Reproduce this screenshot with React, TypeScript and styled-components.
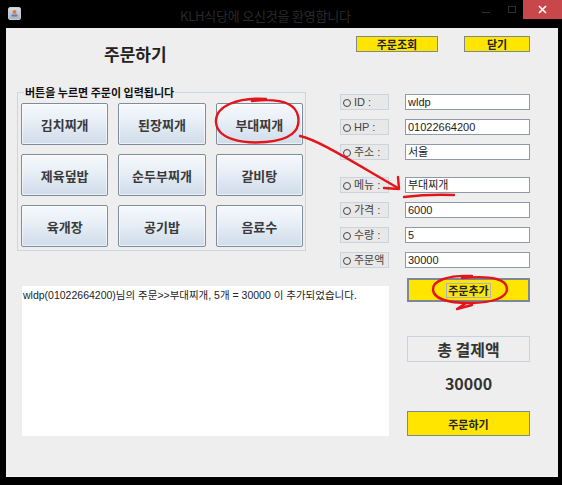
import React from "react";
import styled, { createGlobalStyle } from "styled-components";

const GlobalStyle = createGlobalStyle`
  html, body { margin: 0; padding: 0; background: #000; }
  #root { width: 562px; height: 485px; }
  * { box-sizing: border-box; }
`;

const FONT = `"Liberation Sans", "Noto Sans CJK KR", sans-serif`;

const Frame = styled.div`
  position: relative;
  width: 562px;
  height: 485px;
  background: #000;
  display: flex;
  flex-direction: column;
  font-family: ${FONT};
  overflow: hidden;
`;

const TitleBar = styled.div`
  height: 28px;
  display: flex;
  align-items: flex-start;
  padding-left: 8px;
  color: #2a2a2a;
`;

const AppIcon = styled.div`
  width: 13px;
  height: 13px;
  margin-top: 7px;
  border-radius: 2px;
  background: linear-gradient(#d8dde4, #a9b3bf);
  border: 1px solid #c4ccd6;
  display: flex;
  align-items: center;
  justify-content: center;
`;

const TitleText = styled.div`
  margin-left: 159px;
  margin-top: 6px;
  font-size: 13px;
  color: #2a2a2a;
  font-family: "Noto Sans CJK KR", "Liberation Sans", sans-serif;
  letter-spacing: -0.2px;
`;

const Controls = styled.div`
  margin-left: auto;
  display: flex;
  align-items: flex-start;
  height: 19px;
`;

const Minimize = styled.div`
  width: 8px;
  height: 1px;
  background: #2e2e2e;
  margin-top: 12px;
  margin-right: 18px;
`;

const Maximize = styled.div`
  width: 8px;
  height: 7px;
  border: 1px solid #2e2e2e;
  margin-top: 6px;
  margin-right: 7px;
`;

const Close = styled.div`
  width: 39px;
  height: 19px;
  background: #c7474a;
  display: flex;
  align-items: center;
  justify-content: center;
`;

const Content = styled.div`
  margin-left: 6px;
  width: 552px;
  height: 449px;
  background: #eeeeee;
  border-bottom: 1px solid #f6f6f6;
  display: flex;
  flex-direction: column;
`;

const TopSection = styled.div`
  display: flex;
  align-items: flex-start;
`;

const LeftPart = styled.div`
  margin-left: 11px;
  width: 289px;
  display: flex;
  flex-direction: column;
`;

const Heading = styled.div`
  margin-top: 16px;
  padding-left: 87px;
  font-family: "Noto Sans CJK KR", sans-serif;
  font-size: 17px;
  font-weight: 700;
  line-height: 20px;
  color: #222;
`;

const Group = styled.fieldset`
  margin: 21px 0 0 0;
  padding: 4px 2px 3px 3px;
  border: 1px solid #cdd5de;
  min-width: 0;
`;

const Legend = styled.legend`
  margin-left: 3px;
  padding: 0 1px;
  font-family: "Noto Sans CJK KR", sans-serif;
  font-size: 11px;
  font-weight: 700;
  line-height: 14px;
  color: #111;
`;

const MenuGrid = styled.div`
  display: grid;
  grid-template-columns: repeat(3, 1fr);
  grid-auto-rows: 42px;
  column-gap: 10px;
  row-gap: 9px;
`;

const MenuButton = styled.button`
  border: 1px solid #7f8d9b;
  border-radius: 2px;
  background: linear-gradient(#f6f9fc 0%, #e7eef6 45%, #cfdcea 100%);
  box-shadow: inset 0 0 0 1px rgba(255, 255, 255, 0.6);
  font-family: "Noto Sans CJK KR", sans-serif;
  font-size: 13px;
  font-weight: 700;
  color: #3a3a3a;
  padding: 0;
`;

const RightPart = styled.div`
  margin-left: 34px;
  width: 191px;
  display: flex;
  flex-direction: column;
`;

const TopButtons = styled.div`
  margin-top: 8px;
  padding-left: 16px;
  display: flex;
  gap: 26px;
`;

const YellowButton = styled.button<{ $w?: number; $h?: number; $bw?: number }>`
  width: ${(p) => p.$w ?? 123}px;
  height: ${(p) => p.$h ?? 16}px;
  background: #ffe500;
  border: ${(p) => p.$bw ?? 1}px solid #7d8894;
  padding: 0;
  display: flex;
  align-items: center;
  justify-content: center;
  font-family: "Noto Sans CJK KR", sans-serif;
  font-size: 11px;
  font-weight: 700;
  color: #222;
`;

const FocusText = styled.span`
  border: 1px solid #a9b4bf;
  padding: 0 1px;
  line-height: 13px;
`;

const Form = styled.div`
  margin-top: 42px;
  display: flex;
  flex-direction: column;
`;

const FormRow = styled.div<{ $gap: number }>`
  display: flex;
  align-items: center;
  gap: 16px;
  margin-top: ${(p) => p.$gap}px;
`;

const FieldLabel = styled.div`
  width: 49px;
  height: 16px;
  background: #e8e8e8;
  border: 1px solid #cbd4dd;
  font-size: 11px;
  line-height: 14px;
  color: #444;
  padding-left: 2px;
  white-space: nowrap;
  overflow: hidden;
  font-family: "Liberation Sans", "Noto Sans CJK KR", sans-serif;
`;

const Bullet = styled.span`
  display: inline-block;
  width: 8px;
  height: 8px;
  border: 1px solid #444;
  border-radius: 50%;
  margin-right: 3px;
  vertical-align: -1px;
`;

const FieldInput = styled.div`
  width: 125px;
  height: 16px;
  background: #fff;
  border: 1px solid #8d9aa7;
  font-size: 11px;
  line-height: 14px;
  color: #222;
  padding-left: 2px;
  font-family: "Liberation Sans", "Noto Sans CJK KR", sans-serif;
`;

const BottomSection = styled.div`
  display: flex;
  align-items: flex-start;
`;

const Log = styled.div`
  margin-left: 16px;
  margin-top: 18px;
  width: 367px;
  height: 150px;
  background: #fff;
  font-size: 10.5px;
  line-height: 14px;
  padding: 2px 0 0 1px;
  color: #222;
  font-family: "Liberation Sans", "Noto Sans CJK KR", sans-serif;
  white-space: nowrap;
`;

const RightCol = styled.div`
  margin-left: 18px;
  width: 123px;
  display: flex;
  flex-direction: column;
`;

const TotalLabel = styled.div`
  margin-top: 34px;
  height: 26px;
  border: 1px solid #c8d3de;
  display: flex;
  align-items: center;
  justify-content: center;
  font-family: "Noto Sans CJK KR", sans-serif;
  font-size: 16px;
  font-weight: 700;
  color: #333;
`;

const TotalValue = styled.div`
  margin-top: 11px;
  text-align: center;
  font-family: "Noto Sans CJK KR", "Liberation Sans", sans-serif;
  font-size: 16px;
  font-weight: 700;
  line-height: 20px;
  color: #333;
`;

const Annotations = styled.svg`
  position: absolute;
  left: 0;
  top: 0;
  pointer-events: none;
`;

const menus = ["김치찌개", "된장찌개", "부대찌개", "제육덮밥", "순두부찌개", "갈비탕", "육개장", "공기밥", "음료수"];

const fields: { label: string; value: string; gap: number }[] = [
  { label: "ID :", value: "wldp", gap: 0 },
  { label: "HP :", value: "01022664200", gap: 9 },
  { label: "주소 :", value: "서울", gap: 9 },
  { label: "메뉴 :", value: "부대찌개", gap: 17 },
  { label: "가격 :", value: "6000", gap: 9 },
  { label: "수량 :", value: "5", gap: 9 },
  { label: "주문액 :", value: "30000", gap: 9 },
];

export default function App() {
  return (
    <>
      <GlobalStyle />
      <Frame>
        <TitleBar>
          <AppIcon>
            <svg width="9" height="9" viewBox="0 0 9 9">
              <circle cx="4.5" cy="3" r="2" fill="#e07a3a" />
              <rect x="1.5" y="5.5" width="6" height="2" fill="#5c7fb0" />
            </svg>
          </AppIcon>
          <TitleText>KLH식당에 오신것을 환영합니다</TitleText>
          <Controls>
            <Minimize />
            <Maximize />
            <Close>
              <svg width="9" height="9" viewBox="0 0 9 9">
                <path d="M1 1 L8 8 M8 1 L1 8" stroke="#fff" strokeWidth="1.6" />
              </svg>
            </Close>
          </Controls>
        </TitleBar>
        <Content>
          <TopSection>
            <LeftPart>
              <Heading>주문하기</Heading>
              <Group>
                <Legend>버튼을 누르면 주문이 입력됩니다</Legend>
                <MenuGrid>
                  {menus.map((m) => (
                    <MenuButton key={m}>{m}</MenuButton>
                  ))}
                </MenuGrid>
              </Group>
            </LeftPart>
            <RightPart>
              <TopButtons>
                <YellowButton $w={82}>주문조회</YellowButton>
                <YellowButton $w={66}>닫기</YellowButton>
              </TopButtons>
              <Form>
                {fields.map((f) => (
                  <FormRow key={f.label} $gap={f.gap}>
                    <FieldLabel>
                      <Bullet />
                      {f.label}
                    </FieldLabel>
                    <FieldInput>{f.value}</FieldInput>
                  </FormRow>
                ))}
              </Form>
            </RightPart>
          </TopSection>
          <BottomSection>
            <Log>wldp(01022664200)님의 주문&gt;&gt;부대찌개, 5개 = 30000 이 추가되었습니다.</Log>
            <RightCol>
              <YellowButton $h={24} $bw={2} style={{ marginTop: 10 }}>
                <FocusText>주문추가</FocusText>
              </YellowButton>
              <TotalLabel>총 결제액</TotalLabel>
              <TotalValue>30000</TotalValue>
              <YellowButton $h={25} style={{ marginTop: 18 }}>
                주문하기
              </YellowButton>
            </RightCol>
          </BottomSection>
        </Content>
        <Annotations width="562" height="485" viewBox="0 0 562 485">
          <g fill="none" stroke="#e3141a" strokeWidth="2.4" strokeLinecap="round" strokeLinejoin="round">
            <path d="M266 99 C238 97 215 106 216 122 C217 139 242 144 266 142 C290 140 301 131 298 116 C295 102 279 98 252 101" />
            <path d="M300 136 C318 140 346 158 398 188" />
            <path d="M384 188 L399 189 L398 177" />
            <path d="M404 197 Q428 194 454 195" />
            <path d="M472 276 C447 275 432 281 433 290 C434 299 449 303 470 303 C494 303 507 297 507 289 C507 280 494 275 462 278" />
            <path d="M466 303 L457 309 L472 305" />
          </g>
        </Annotations>
      </Frame>
    </>
  );
}
